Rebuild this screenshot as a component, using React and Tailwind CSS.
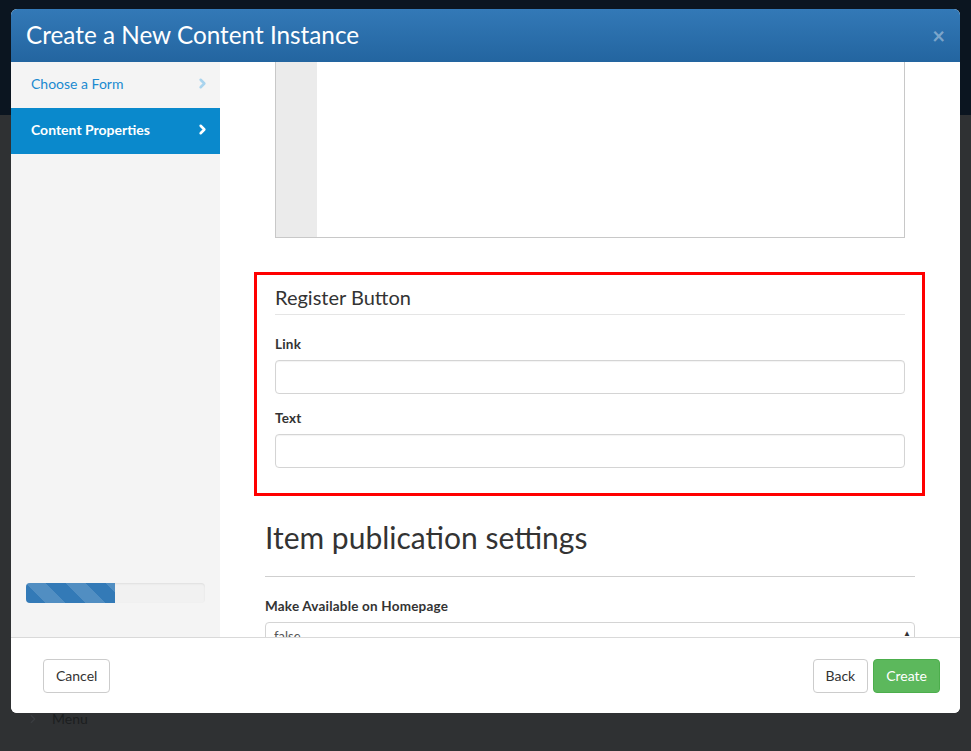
import { ChevronRight } from "lucide-react";

const font = { fontFamily: "Lato, 'Open Sans', sans-serif" };

function Field({ label, first }) {
  return (
    <div className={first ? "mt-5" : "mt-[15px]"}>
      <label className="block text-[13.5px] font-bold leading-[18px] tracking-[0.2px] text-[#333]">{label}</label>
      <div className="mt-[7px] h-[34px] rounded-[4px] border border-[#d4d4d4] bg-white shadow-[inset_0_1px_1px_rgba(0,0,0,0.05)]" />
    </div>
  );
}

export default function App() {
  return (
    <div className="relative h-[751px] w-[971px] overflow-hidden bg-[#2f3133]" style={font}>
      {/* page behind the overlay */}
      <div className="h-[115px] bg-[#0b1520]" />
      <div className="flex items-center gap-3 px-[26px] pt-[593px] text-[14px] text-[#1c1e20]">
        <ChevronRight size={14} className="text-[#3a3d40]" />
        <span>Menu</span>
      </div>

      {/* modal */}
      <div className="absolute left-[11px] top-[9px] flex h-[704px] w-[949px] flex-col overflow-hidden rounded-[6px] bg-white">
        <div className="flex h-[53px] shrink-0 items-center justify-between bg-gradient-to-b from-[#3379b7] to-[#2365a0] pl-[15px] pr-[15px]">
          <h1 className="text-[24.3px] font-normal text-white">Create a New Content Instance</h1>
          <span className="text-[22px] font-bold leading-none text-white/40">×</span>
        </div>

        <div className="flex min-h-0 flex-1">
          {/* sidebar */}
          <div className="flex w-[209px] shrink-0 flex-col bg-[#f4f4f4]">
            <div className="flex h-[46px] items-center justify-between pb-1 pl-5 pr-[10px] text-[14px] text-[#1a8ad0]">
              <span>Choose a Form</span>
              <ChevronRight size={15} strokeWidth={4} className="text-[#a9d4ee]" />
            </div>
            <div className="flex h-[46px] items-center justify-between bg-[#0a89cc] pb-1 pl-5 pr-[10px] text-[14px] font-bold text-white">
              <span>Content Properties</span>
              <ChevronRight size={15} strokeWidth={4} className="text-white" />
            </div>
            <div className="mx-[15px] mt-[429px] h-5 overflow-hidden rounded-[4px] bg-[#f1f1f1] shadow-[inset_0_1px_2px_rgba(0,0,0,0.08)]">
              <div className="h-full w-[89px] bg-[#337ab7] bg-[linear-gradient(45deg,rgba(255,255,255,0.15)_25%,transparent_25%,transparent_50%,rgba(255,255,255,0.15)_50%,rgba(255,255,255,0.15)_75%,transparent_75%,transparent)] bg-[length:40px_40px]" />
            </div>
          </div>

          {/* content */}
          <div className="min-w-0 flex-1 overflow-hidden px-[45px]">
            <div className="mx-[10px] flex h-[176px] border-x border-b border-[#c8c8c8]">
              <div className="w-[41px] bg-[#ebebeb]" />
              <div className="flex-1 bg-white" />
            </div>

            <div className="ml-[-11px] mr-[-10px] mt-[34px] border-[3px] border-[#ff0000] pb-[25px] pl-[18px] pr-[17px] pt-[11px]">
              <div className="border-b border-[#e5e5e5] pb-[6px] text-[20px] leading-[22px] text-[#333]">Register Button</div>
              <Field label="Link" first />
              <Field label="Text" />
            </div>

            <h2 className="mt-[23px] text-[30px] font-normal leading-[36px] text-[#333]">Item publication settings</h2>
            <div className="mt-[21px] border-t border-[#cfcfcf]" />
            <label className="mt-[20px] block text-[13.5px] font-bold leading-[18px] tracking-[0.2px] text-[#333]">Make Available on Homepage</label>
            <div className="relative mt-[7px] h-[34px] rounded-[4px] border border-[#d4d4d4] bg-white pl-2 pt-[4px] text-[13px] text-[#555]">
              false
              <span className="absolute right-[3px] top-[4px] text-[8px] text-[#333]">▲</span>
            </div>
          </div>
        </div>

        <div className="flex h-[76px] shrink-0 items-center justify-between border-t border-[#d9d9d9] bg-white pl-8 pr-5">
          <button className="h-[34px] rounded-[4px] border border-[#ccc] bg-white px-3 text-[14px] text-[#333]">Cancel</button>
          <div className="flex gap-[5px]">
            <button className="h-[34px] rounded-[4px] border border-[#ccc] bg-white px-3 text-[14px] text-[#333]">Back</button>
            <button className="h-[34px] rounded-[4px] border border-[#4cae4c] bg-[#5cb85c] px-3 text-[14px] text-white">Create</button>
          </div>
        </div>
      </div>
    </div>
  );
}
